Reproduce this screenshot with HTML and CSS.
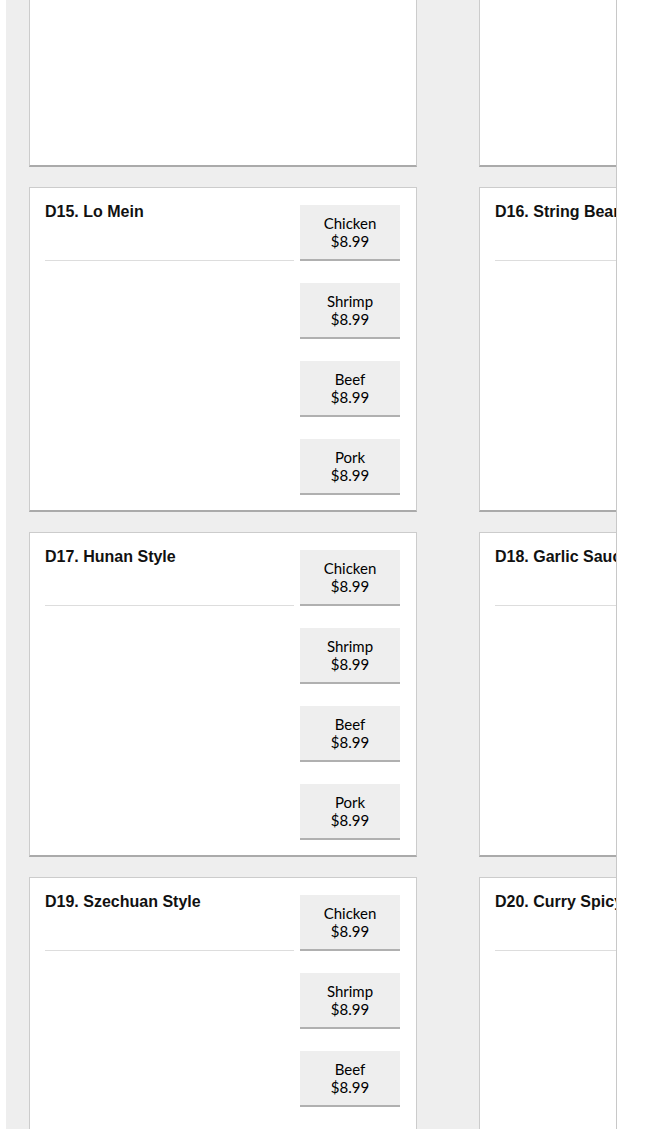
FILE: index.html
```html
<!DOCTYPE html>
<html>
<head>
<meta charset="utf-8">
<link rel="stylesheet" href="styles.css">
</head>
<body>
<div class="page">
  <div class="grid">
    <div class="card card-top"></div>
    <div class="card card-top"></div>

    <div class="card">
      <div class="info"><div class="title">D15. Lo Mein</div></div>
      <div class="opts">
        <div class="opt">Chicken<br>$8.99</div>
        <div class="opt">Shrimp<br>$8.99</div>
        <div class="opt">Beef<br>$8.99</div>
        <div class="opt">Pork<br>$8.99</div>
      </div>
    </div>
    <div class="card">
      <div class="info"><div class="title">D16. String Beans</div></div>
      <div class="opts">
        <div class="opt">Chicken<br>$8.99</div>
        <div class="opt">Shrimp<br>$8.99</div>
        <div class="opt">Beef<br>$8.99</div>
        <div class="opt">Pork<br>$8.99</div>
      </div>
    </div>

    <div class="card">
      <div class="info"><div class="title">D17. Hunan Style</div></div>
      <div class="opts">
        <div class="opt">Chicken<br>$8.99</div>
        <div class="opt">Shrimp<br>$8.99</div>
        <div class="opt">Beef<br>$8.99</div>
        <div class="opt">Pork<br>$8.99</div>
      </div>
    </div>
    <div class="card">
      <div class="info"><div class="title">D18. Garlic Sauce</div></div>
      <div class="opts">
        <div class="opt">Chicken<br>$8.99</div>
        <div class="opt">Shrimp<br>$8.99</div>
        <div class="opt">Beef<br>$8.99</div>
        <div class="opt">Pork<br>$8.99</div>
      </div>
    </div>

    <div class="card">
      <div class="info"><div class="title">D19. Szechuan Style</div></div>
      <div class="opts">
        <div class="opt">Chicken<br>$8.99</div>
        <div class="opt">Shrimp<br>$8.99</div>
        <div class="opt">Beef<br>$8.99</div>
        <div class="opt">Pork<br>$8.99</div>
      </div>
    </div>
    <div class="card">
      <div class="info"><div class="title">D20. Curry Spicy</div></div>
      <div class="opts">
        <div class="opt">Chicken<br>$8.99</div>
        <div class="opt">Shrimp<br>$8.99</div>
        <div class="opt">Beef<br>$8.99</div>
        <div class="opt">Pork<br>$8.99</div>
      </div>
    </div>
  </div>
</div>
</body>
</html>
```
FILE: styles.css
```css
html, body {
  margin: 0;
  padding: 0;
  background: #fff;
  height: 1129px;
  overflow: hidden;
}
.page {
  margin-left: 6px;
  width: 610px;
  height: 1400px;
  background: #eeeeee;
  border-right: 1px solid #c8c8c8;
  overflow: hidden;
}
.grid {
  display: grid;
  grid-template-columns: 388px 388px;
  column-gap: 62px;
  row-gap: 20px;
  padding-left: 23px;
}
.card {
  background: #fff;
  border: 1px solid #cccccc;
  border-bottom: 2px solid #aaaaaa;
  display: flex;
  gap: 6px;
  padding: 15px 16px 15px 15px;
  box-sizing: border-box;
  width: 388px;
}
.card-top {
  height: 167px;
  border-top: none;
}
.info {
  width: 249px;
  flex: none;
  align-self: flex-start;
  padding-bottom: 39px;
  border-bottom: 1px solid #dddddd;
}
.title {
  font-family: "Liberation Sans", Arial, sans-serif;
  font-weight: bold;
  font-size: 16px;
  line-height: 18px;
  color: #111;
}
.opts {
  width: 100px;
  flex: none;
  display: flex;
  flex-direction: column;
  gap: 22px;
  padding-top: 2px;
}
.opt {
  height: 54px;
  box-sizing: content-box;
  background: #eeeeee;
  border-bottom: 2px solid #b0b0b0;
  font-family: Lato, "Liberation Sans", sans-serif;
  font-size: 15px;
  line-height: 18px;
  color: #000;
  text-align: center;
  display: flex;
  align-items: center;
  justify-content: center;
}
```
